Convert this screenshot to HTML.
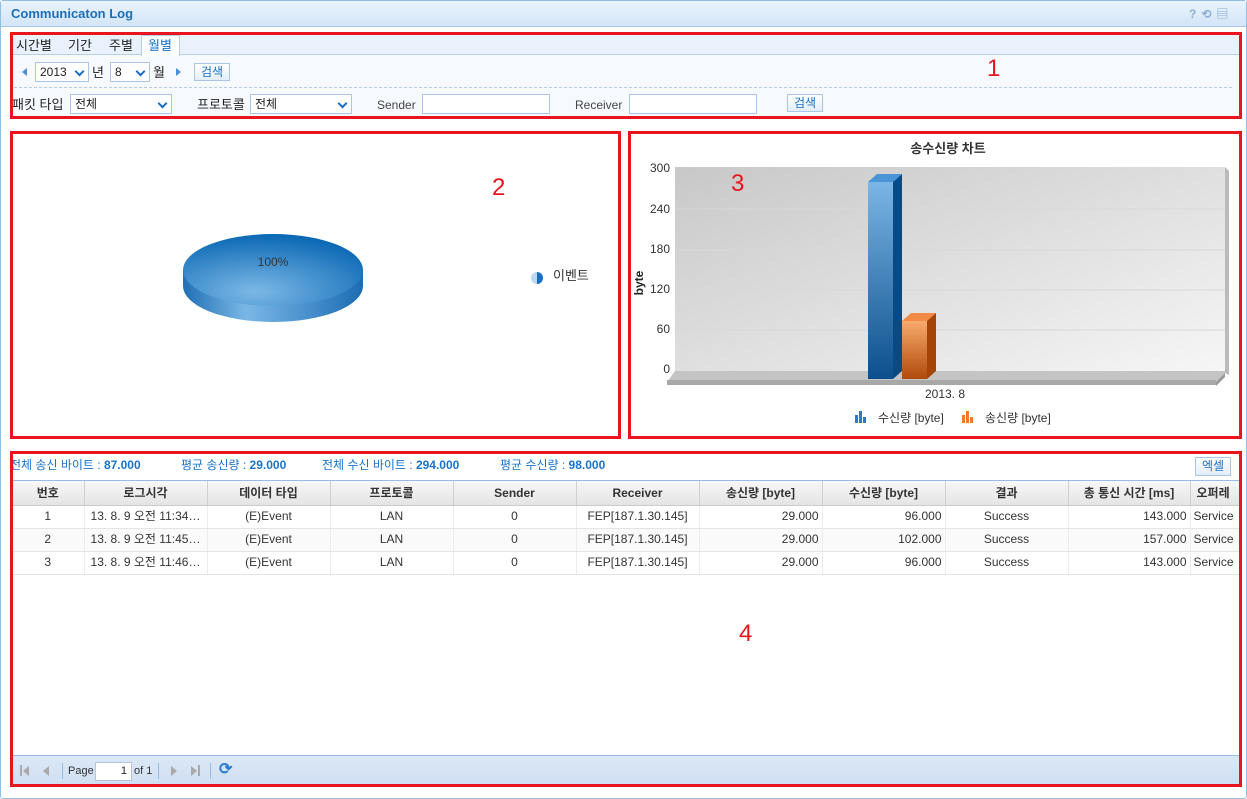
<!DOCTYPE html>
<html><head><meta charset="utf-8"><style>
*{box-sizing:border-box;margin:0;padding:0}
body{width:1247px;height:799px;background:#fff;font-family:"Liberation Sans","Noto Sans CJK KR",sans-serif;font-size:12px;line-height:1.2;color:#222;position:relative;overflow:hidden}
.a{position:absolute}
.red{position:absolute;border:3px solid #e8141e}
.sel{position:absolute;height:20px;border:1px solid #a9c6e6;background:#fff;font-size:12px;padding:2px 4px}
.sel:after{content:"";position:absolute;right:5px;top:5px;width:5px;height:5px;border-right:2px solid #1a6fc4;border-bottom:2px solid #1a6fc4;transform:rotate(45deg)}
.btn{position:absolute;height:18px;border:1px solid #a9c6e6;background:linear-gradient(#fff,#e2eefa);color:#1a6fc4;font-size:12px;text-align:center;line-height:16px}
.inp{position:absolute;height:20px;border:1px solid #a9c6e6;background:#fff}
table{border-collapse:collapse;table-layout:fixed;font-size:12px}
th{height:24px;background:linear-gradient(#f8f8f8,#e4e4e4);border-right:1px solid #d0d0d0;border-bottom:1px solid #ccc;font-weight:bold;color:#333;white-space:nowrap;overflow:hidden}
td{height:23px;border-right:1px solid #ececec;border-bottom:1px solid #e4e4e4;text-align:center;color:#333;white-space:nowrap;overflow:hidden;padding:0 3px}
td.r{text-align:right}
.stat{color:#1a73c8;font-size:12px}
.stat b{color:#1a73c8}
</style></head><body>
<div class="a" style="left:0;top:0;width:1247px;height:799px;border:1px solid #8fc0e8;border-radius:3px"></div>
<div class="a" style="left:1px;top:1px;width:1245px;height:26px;background:linear-gradient(#eaf3fd,#d3e5f8);border-bottom:1px solid #a9c8e8"></div>
<div class="a" style="left:11px;top:6px;font-weight:bold;font-size:13px;color:#1c6fb8">Communicaton Log</div>
<div class="a" style="left:1189px;top:7px;color:#8aaed6;font-size:12px;font-weight:bold;letter-spacing:5px">?⟲▤</div>

<div class="a" style="left:12px;top:34px;width:1228px;height:82px;background:#f6f9fe"></div>
<div class="a" style="left:12px;top:34px;width:1228px;height:21px;background:#e8f1fc;border-bottom:1px solid #b8cfe6"></div>
<div class="a" style="left:141px;top:35px;width:39px;height:21px;background:#fbfdff;border:1px solid #b8cfe6;border-bottom:none"></div>
<div class="a" style="left:16px;top:38px;font-size:13px">시간별</div>
<div class="a" style="left:68px;top:38px;font-size:13px">기간</div>
<div class="a" style="left:109px;top:38px;font-size:13px">주별</div>
<div class="a" style="left:148px;top:38px;font-size:13px;color:#1a73c8">월별</div>
<div class="a" style="left:22px;top:68px;width:0;height:0;border:4px solid transparent;border-right:5px solid #4a90d8;border-left:none"></div>
<div class="sel" style="left:35px;top:62px;width:54px">2013</div>
<div class="a" style="left:92px;top:65px;font-size:13px">년</div>
<div class="sel" style="left:110px;top:62px;width:40px">8</div>
<div class="a" style="left:153px;top:65px;font-size:13px">월</div>
<div class="a" style="left:176px;top:68px;width:0;height:0;border:4px solid transparent;border-left:5px solid #4a90d8;border-right:none"></div>
<div class="btn" style="left:194px;top:63px;width:36px">검색</div>
<div class="a" style="left:14px;top:87px;width:1218px;border-top:1px dashed #b8cbe0"></div>
<div class="a" style="left:12px;top:97px;font-size:13px">패킷 타입</div>
<div class="sel" style="left:70px;top:94px;width:102px">전체</div>
<div class="a" style="left:197px;top:97px;font-size:13px">프로토콜</div>
<div class="sel" style="left:250px;top:94px;width:102px">전체</div>
<div class="a" style="left:377px;top:98px;color:#444">Sender</div>
<div class="inp" style="left:422px;top:94px;width:128px"></div>
<div class="a" style="left:575px;top:98px;color:#444">Receiver</div>
<div class="inp" style="left:629px;top:94px;width:128px"></div>
<div class="btn" style="left:787px;top:94px;width:36px">검색</div>
<div class="red" style="left:10px;top:32px;width:1232px;height:87px"></div>
<div class="a" style="left:987px;top:55px;color:#e8141e;font-size:24px">1</div>

<svg class="a" style="left:150px;top:220px" width="460" height="120">
<defs>
<linearGradient id="ps" x1="0" x2="1"><stop offset="0" stop-color="#1f6fb5"/><stop offset=".35" stop-color="#7ab7e6"/><stop offset="1" stop-color="#1d6cb4"/></linearGradient>
<radialGradient id="pt" cx=".4" cy=".8" r=".8"><stop offset="0" stop-color="#7cb8e6"/><stop offset="1" stop-color="#0a68b4"/></radialGradient>
</defs>
<path d="M33 50 L33 66 A90 36 0 0 0 213 66 L213 50 Z" fill="url(#ps)"/>
<ellipse cx="123" cy="50" rx="90" ry="36" fill="url(#pt)"/>
<text x="123" y="46" font-size="12" fill="#333" text-anchor="middle" font-family="Liberation Sans">100%</text>
<circle cx="387" cy="58" r="6" fill="#bcd8f0"/><path d="M387 52 A6 6 0 0 1 387 64 Z" fill="#1a6fc4"/>
<text x="403" y="60" font-size="13" fill="#333" font-family="Liberation Sans,Noto Sans CJK KR">이벤트</text>
</svg>
<div class="red" style="left:10px;top:131px;width:611px;height:308px"></div>
<div class="a" style="left:492px;top:174px;color:#e8141e;font-size:24px">2</div>

<svg class="a" style="left:630px;top:133px" width="612" height="304">
<defs>
<linearGradient id="bg" x1="0" y1="0" x2="1" y2="1"><stop offset="0" stop-color="#c8c8c8"/><stop offset="1" stop-color="#f6f6f6"/></linearGradient>
<linearGradient id="bf" x1="0" y1="0" x2="0" y2="1"><stop offset="0" stop-color="#7ab6e6"/><stop offset="1" stop-color="#0c4f8c"/></linearGradient>
<linearGradient id="of" x1="0" y1="0" x2="0" y2="1"><stop offset="0" stop-color="#f8aa6c"/><stop offset="1" stop-color="#b04a0c"/></linearGradient>
</defs>
<text x="318" y="20" font-size="13" font-weight="bold" fill="#333" text-anchor="middle" font-family="Liberation Sans,Noto Sans CJK KR">송수신량 차트</text>
<rect x="45" y="34" width="550" height="205" fill="url(#bg)"/>
<polygon points="595,34 599,38 599,242 595,240" fill="#bbb"/>
<g stroke="#d8d8d8"><line x1="45" y1="76" x2="595" y2="76"/><line x1="45" y1="117" x2="595" y2="117"/><line x1="45" y1="157" x2="595" y2="157"/><line x1="45" y1="197" x2="595" y2="197"/></g>
<polygon points="45,238 595,238 595,240 586,249 37,249" fill="#c4c4c4"/>
<rect x="37" y="247" width="549" height="5" fill="#a8a8a8"/>
<polygon points="586,249 595,240 595,244 586,253" fill="#999"/>
<g font-size="12" fill="#333" text-anchor="end" font-family="Liberation Sans"><text x="40" y="39">300</text><text x="40" y="80">240</text><text x="40" y="120">180</text><text x="40" y="160">120</text><text x="40" y="200">60</text><text x="40" y="240">0</text></g>
<text x="13" y="150" font-size="12" font-weight="bold" fill="#222" transform="rotate(-90 13 150)" text-anchor="middle" font-family="Liberation Sans">byte</text>
<rect x="238" y="49" width="25" height="197" fill="url(#bf)"/>
<polygon points="238,49 247,41 272,41 263,49" fill="#4b94d6"/>
<polygon points="263,49 272,41 272,238 263,246" fill="#0a4a84"/>
<rect x="272" y="188" width="25" height="58" fill="url(#of)"/>
<polygon points="272,188 281,180 306,180 297,188" fill="#f08a44"/>
<polygon points="297,188 306,180 306,238 297,246" fill="#a64306"/>
<text x="315" y="265" font-size="12" fill="#333" text-anchor="middle" font-family="Liberation Sans">2013. 8</text>
<g fill="#2a7cc8"><rect x="225" y="282" width="3" height="8"/><rect x="229" y="278" width="3" height="12"/><rect x="233" y="284" width="3" height="6"/></g>
<g fill="#f07a2a"><rect x="332" y="282" width="3" height="8"/><rect x="336" y="278" width="3" height="12"/><rect x="340" y="284" width="3" height="6"/></g>
<g font-size="12" fill="#333" font-family="Liberation Sans,Noto Sans CJK KR"><text x="248" y="289">수신량 [byte]</text><text x="355" y="289">송신량 [byte]</text></g>
</svg>
<div class="red" style="left:628px;top:131px;width:614px;height:308px"></div>
<div class="a" style="left:731px;top:170px;color:#e8141e;font-size:24px">3</div>

<div class="a stat" style="left:10px;top:458px">전체 송신 바이트 : <b>87.000</b></div>
<div class="a stat" style="left:181px;top:458px">평균 송신량 : <b>29.000</b></div>
<div class="a stat" style="left:322px;top:458px">전체 수신 바이트 : <b>294.000</b></div>
<div class="a stat" style="left:500px;top:458px">평균 수신량 : <b>98.000</b></div>
<div class="btn" style="left:1195px;top:457px;width:36px;height:19px">엑셀</div>
<div class="a" style="left:12px;top:480px;width:1228px;height:276px;border-top:1px solid #99bbe8;overflow:hidden">
<table style="width:1270px">
<colgroup><col style="width:72px"><col style="width:123px"><col style="width:123px"><col style="width:123px"><col style="width:123px"><col style="width:123px"><col style="width:123px"><col style="width:123px"><col style="width:123px"><col style="width:122px"><col style="width:92px"></colgroup>
<tr><th>번호</th><th>로그시각</th><th>데이터 타입</th><th>프로토콜</th><th>Sender</th><th>Receiver</th><th>송신량 [byte]</th><th>수신량 [byte]</th><th>결과</th><th>총 통신 시간 [ms]</th><th style="text-align:left;padding-left:6px">오퍼레</th></tr>
<tr><td>1</td><td>13. 8. 9 오전 11:34…</td><td>(E)Event</td><td>LAN</td><td>0</td><td>FEP[187.1.30.145]</td><td class="r">29.000</td><td class="r">96.000</td><td>Success</td><td class="r">143.000</td><td style="text-align:left">Service</td></tr>
<tr style="background:#fafafa"><td>2</td><td>13. 8. 9 오전 11:45…</td><td>(E)Event</td><td>LAN</td><td>0</td><td>FEP[187.1.30.145]</td><td class="r">29.000</td><td class="r">102.000</td><td>Success</td><td class="r">157.000</td><td style="text-align:left">Service</td></tr>
<tr><td>3</td><td>13. 8. 9 오전 11:46…</td><td>(E)Event</td><td>LAN</td><td>0</td><td>FEP[187.1.30.145]</td><td class="r">29.000</td><td class="r">96.000</td><td>Success</td><td class="r">143.000</td><td style="text-align:left">Service</td></tr>
</table></div>
<div class="a" style="left:12px;top:755px;width:1228px;height:30px;background:linear-gradient(#dce8f6,#cfdff2);border-top:1px solid #99bbe8"></div>
<div class="a" style="left:20px;top:765px;width:2px;height:11px;background:#aaa"></div>
<div class="a" style="left:23px;top:766px;border:5px solid transparent;border-right:6px solid #aaa;border-left:none"></div>
<div class="a" style="left:43px;top:766px;border:5px solid transparent;border-right:6px solid #aaa;border-left:none"></div>
<div class="a" style="left:62px;top:763px;width:1px;height:16px;background:#99bbe8"></div>
<div class="a" style="left:68px;top:765px;font-size:11px;color:#333">Page</div>
<div class="a" style="left:95px;top:762px;width:37px;height:19px;background:#fff;border:1px solid #b5c4d6;font-size:11px;text-align:right;padding:2px 4px">1</div>
<div class="a" style="left:134px;top:765px;font-size:11px;color:#333">of 1</div>
<div class="a" style="left:158px;top:763px;width:1px;height:16px;background:#99bbe8"></div>
<div class="a" style="left:171px;top:766px;border:5px solid transparent;border-left:6px solid #aaa;border-right:none"></div>
<div class="a" style="left:191px;top:766px;border:5px solid transparent;border-left:6px solid #aaa;border-right:none"></div>
<div class="a" style="left:198px;top:765px;width:2px;height:11px;background:#aaa"></div>
<div class="a" style="left:210px;top:763px;width:1px;height:16px;background:#99bbe8"></div>
<div class="a" style="left:219px;top:760px;color:#2a7cd0;font-size:16px;font-weight:bold">⟳</div>
<div class="red" style="left:10px;top:451px;width:1232px;height:336px"></div>
<div class="a" style="left:739px;top:620px;color:#e8141e;font-size:24px">4</div>
</body></html>
